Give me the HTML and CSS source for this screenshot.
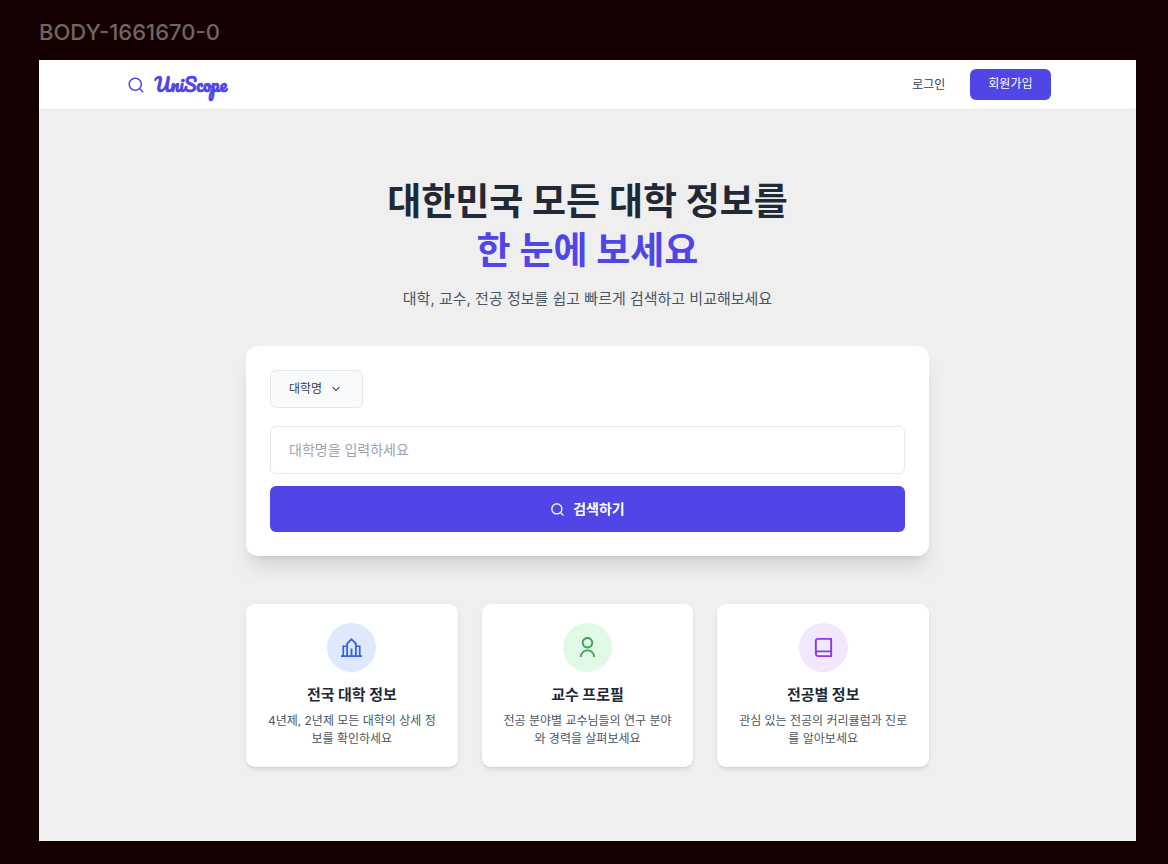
FILE: index.html
```html
<!DOCTYPE html>
<html lang="ko">
<head>
<meta charset="utf-8">
<meta name="viewport" content="width=device-width, initial-scale=1">
<title>UniScope</title>
<link rel="stylesheet" href="styles.css">
</head>
<body>
<p class="frame-label">BODY-1661670-0</p>
<div class="frame">
  <header class="header">
    <div class="header-inner">
      <a class="brand" href="#">
        <svg class="brand-icon" viewBox="0 0 24 24" aria-hidden="true"><path d="M18.031 16.6168L22.3137 20.8995L20.8995 22.3137L16.6168 18.031C15.0769 19.263 13.124 20 11 20C6.032 20 2 15.968 2 11C2 6.032 6.032 2 11 2C15.968 2 20 6.032 20 11C20 13.124 19.263 15.0769 18.031 16.6168ZM16.0247 15.8748C17.2475 14.6146 18 12.8956 18 11C18 7.1325 14.8675 4 11 4C7.1325 4 4 7.1325 4 11C4 14.8675 7.1325 18 11 18C12.8956 18 14.6146 17.2475 15.8748 16.0247L16.0247 15.8748Z"/></svg>
        <span class="brand-name">UniScope</span>
      </a>
      <nav class="nav">
        <a class="login" href="#">로그인</a>
        <button class="signup" type="button">회원가입</button>
      </nav>
    </div>
  </header>
  <main class="main">
    <h1 class="title">대한민국 모든 대학 정보를<br><span class="accent">한 눈에 보세요</span></h1>
    <p class="subtitle">대학, 교수, 전공 정보를 쉽고 빠르게 검색하고 비교해보세요</p>
    <form class="search">
      <div class="picker">
        <select class="select" aria-label="검색 기준"><option>대학명</option></select>
        <svg class="chevron" viewBox="0 0 24 24" aria-hidden="true"><path d="M11.9997 13.1714L16.9495 8.22168L18.3637 9.63589L11.9997 15.9999L5.63574 9.63589L7.04996 8.22168L11.9997 13.1714Z"/></svg>
      </div>
      <input class="query" type="text" placeholder="대학명을 입력하세요" aria-label="대학명">
      <button class="submit" type="submit">
        <svg class="submit-icon" viewBox="0 0 24 24" aria-hidden="true"><path d="M18.031 16.6168L22.3137 20.8995L20.8995 22.3137L16.6168 18.031C15.0769 19.263 13.124 20 11 20C6.032 20 2 15.968 2 11C2 6.032 6.032 2 11 2C15.968 2 20 6.032 20 11C20 13.124 19.263 15.0769 18.031 16.6168ZM16.0247 15.8748C17.2475 14.6146 18 12.8956 18 11C18 7.1325 14.8675 4 11 4C7.1325 4 4 7.1325 4 11C4 14.8675 7.1325 18 11 18C12.8956 18 14.6146 17.2475 15.8748 16.0247L16.0247 15.8748Z"/></svg>
        검색하기
      </button>
    </form>
    <section class="features">
      <article class="card">
        <div class="badge badge-blue">
          <svg class="badge-icon" viewBox="0 0 24 24" aria-hidden="true"><path d="M1 20H2.500V9.800H6.500V7.500L12 2L17.500 7.500V9.800H21.500V20H23V22H1V20ZM4.300 20H6.500V11.600H4.300V20ZM17.500 20H19.700V11.600H17.500V20ZM11 20V13H13V20H15.600V8.300L12 4.700L8.400 8.300V20H11Z"/></svg>
        </div>
        <h2 class="card-title">전국 대학 정보</h2>
        <p class="card-text">4년제, 2년제 모든 대학의 상세 정보를 확인하세요</p>
      </article>
      <article class="card">
        <div class="badge badge-green">
          <svg class="badge-icon" viewBox="0 0 24 24" aria-hidden="true"><path d="M4 22C4 17.5817 7.58172 14 12 14C16.4183 14 20 17.5817 20 22H18C18 18.6863 15.3137 16 12 16C8.68629 16 6 18.6863 6 22H4ZM12 13C8.685 13 6 10.315 6 7C6 3.685 8.685 1 12 1C15.315 1 18 3.685 18 7C18 10.315 15.315 13 12 13ZM12 11C14.21 11 16 9.21 16 7C16 4.79 14.21 3 12 3C9.79 3 8 4.79 8 7C8 9.21 9.79 11 12 11Z"/></svg>
        </div>
        <h2 class="card-title">교수 프로필</h2>
        <p class="card-text">전공 분야별 교수님들의 연구 분야와 경력을 살펴보세요</p>
      </article>
      <article class="card">
        <div class="badge badge-purple">
          <svg class="badge-icon" viewBox="0 0 24 24" aria-hidden="true"><path d="M3 18.5V5C3 3.34315 4.34315 2 6 2H20C20.5523 2 21 2.44772 21 3V21C21 21.5523 20.5523 22 20 22H6.5C4.567 22 3 20.433 3 18.5ZM19 20V17H6.5C5.67157 17 5 17.6716 5 18.5C5 19.3284 5.67157 20 6.5 20H19ZM5 15.3368C5.45463 15.1208 5.9632 15 6.5 15H19V4H6C5.44772 4 5 4.44772 5 5V15.3368Z"/></svg>
        </div>
        <h2 class="card-title">전공별 정보</h2>
        <p class="card-text">관심 있는 전공의 커리큘럼과 진로를 알아보세요</p>
      </article>
    </section>
  </main>
</div>
</body>
</html>
```
FILE: styles.css
```css
* {
  box-sizing: border-box;
}

body {
  margin: 0;
  padding: 18px 32px 23px 39px;
  background: #140000;
  color: #1f2937;
  font-family: Inter, "Noto Sans CJK KR", sans-serif;
  font-size: 12px;
  line-height: 18px;
}

h1, h2, p {
  margin: 0;
}

button, input, select {
  font: inherit;
}

svg {
  fill: currentColor;
  flex: none;
}

.frame-label {
  margin-bottom: 14px;
  color: #6f6565;
  font-size: 22px;
  font-weight: 500;
  line-height: 28px;
}

.frame {
  background: #efefef;
}

.header {
  background: #fff;
  border-bottom: 1px solid #e8e8ea;
}

.header-inner {
  display: flex;
  align-items: center;
  justify-content: space-between;
  max-width: 974px;
  margin: 0 auto;
  padding: 9px 24px;
}

.brand {
  display: flex;
  align-items: center;
  gap: 10px;
  padding-left: 2px;
  color: #4f46e5;
  text-decoration: none;
}

.brand-icon {
  width: 18px;
  height: 18px;
}

.brand-name {
  font-family: Pacifico, cursive;
  font-size: 18px;
  font-weight: 700;
  line-height: 24px;
}

.nav {
  display: flex;
  align-items: center;
  gap: 25px;
}

.login {
  color: #374151;
  text-decoration: none;
}

.signup {
  padding: 6px 18px 7px;
  border: 0;
  border-radius: 6px;
  background: #4f46e5;
  color: #fff;
}

.main {
  max-width: 731px;
  margin: 0 auto;
  padding: 67px 24px 74px;
}

.title {
  font-size: 37px;
  font-weight: 700;
  line-height: 49px;
  text-align: center;
}

.accent {
  color: #4f46e5;
}

.subtitle {
  margin: 12px 0 35px;
  color: #4b5563;
  font-size: 15px;
  line-height: 24px;
  text-align: center;
}

.search {
  display: flex;
  flex-direction: column;
  gap: 12px;
  padding: 24px;
  border-radius: 12px;
  background: #fff;
  box-shadow: 0 15px 19px -4px rgba(0, 0, 0, 0.1), 0 6px 8px -5px rgba(0, 0, 0, 0.1);
}

.picker {
  position: relative;
  align-self: flex-start;
  margin-bottom: 6px;
}

.select {
  display: block;
  padding: 9px 39px 9px 18px;
  border: 1px solid #e5e7eb;
  border-radius: 6px;
  background: #f9fafb;
  color: #374151;
  line-height: 18px;
  appearance: none;
}

.chevron {
  position: absolute;
  top: 12px;
  right: 20px;
  width: 14px;
  height: 14px;
  color: #374151;
  pointer-events: none;
}

.query {
  width: 100%;
  padding: 12px 18px;
  border: 1px solid #e5e7eb;
  border-radius: 6px;
  background: #fff;
  color: #1f2937;
  font-size: 14px;
  line-height: 22px;
}

.query::placeholder {
  color: #9ca3af;
}

.submit {
  display: flex;
  align-items: center;
  justify-content: center;
  gap: 8px;
  padding: 11px;
  border: 0;
  border-radius: 6px;
  background: #4f46e5;
  color: #fff;
  font-size: 14px;
  font-weight: 700;
  line-height: 24px;
}

.submit-icon {
  width: 15px;
  height: 15px;
}

.features {
  display: grid;
  grid-template-columns: repeat(3, 1fr);
  gap: 24px;
  margin-top: 48px;
}

.card {
  display: flex;
  flex-direction: column;
  align-items: center;
  padding: 19px 18px;
  border-radius: 9px;
  background: #fff;
  box-shadow: 0 3px 5px -1px rgba(0, 0, 0, 0.1), 0 1px 3px -1px rgba(0, 0, 0, 0.1);
  text-align: center;
}

.badge {
  display: grid;
  place-items: center;
  width: 49px;
  height: 49px;
  border-radius: 50%;
}

.badge-icon {
  width: 23px;
  height: 23px;
}

.badge-blue {
  background: #dee9fc;
  color: #3662e3;
}

.badge-green {
  background: #e1fae8;
  color: #41a356;
}

.badge-purple {
  background: #f1e7fe;
  color: #8b3be3;
}

.card-title {
  margin: 12px 0 6px;
  font-size: 15px;
  font-weight: 700;
  line-height: 22px;
}

.card-text {
  color: #4b5563;
}
```
